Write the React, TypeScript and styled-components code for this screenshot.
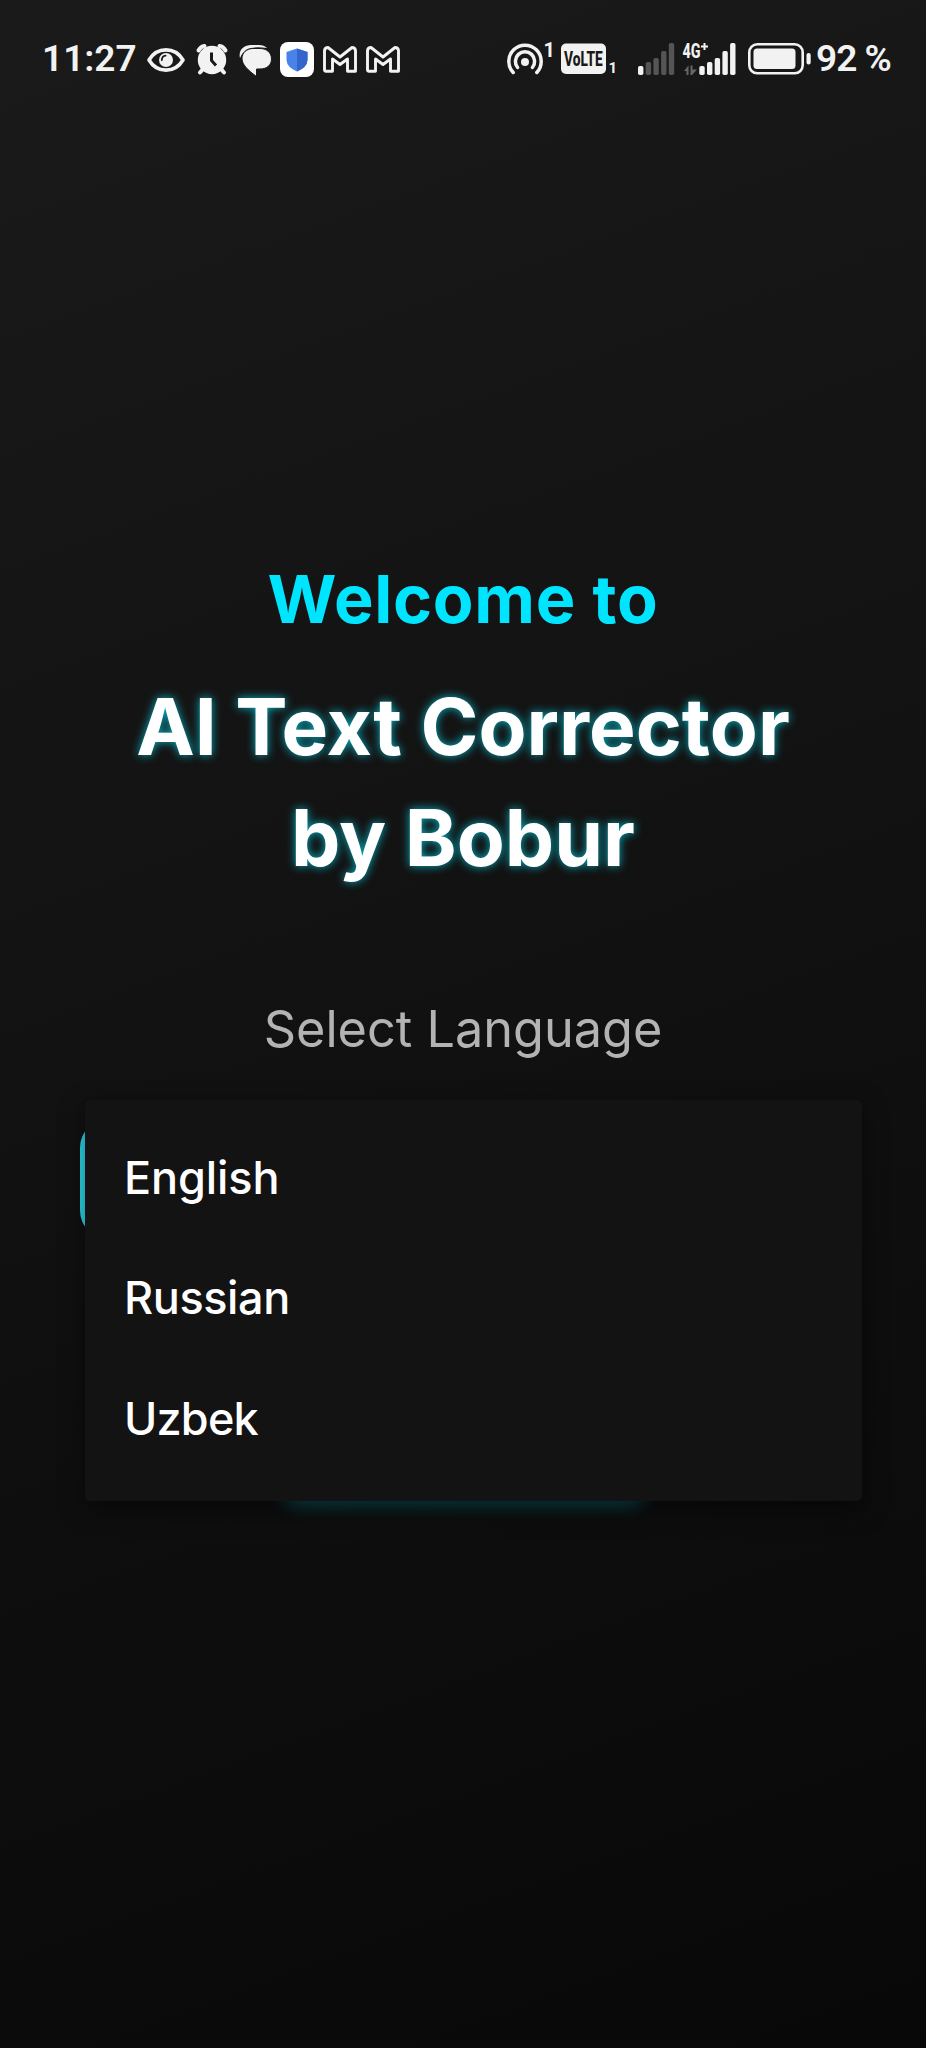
import React from "react";
import styled, { createGlobalStyle } from "styled-components";

const Global = createGlobalStyle`
  html, body { margin: 0; padding: 0; background: #101010; }
  * { box-sizing: border-box; }
`;

const Screen = styled.div`
  width: 926px;
  height: 2048px;
  overflow: hidden;
  display: flex;
  flex-direction: column;
  background: linear-gradient(160deg, #1a1a1a 0%, #080808 100%);
  font-family: Inter, "Noto Sans", sans-serif;
`;

const StatusBar = styled.header`
  height: 118px;
  display: flex;
  justify-content: space-between;
  padding: 40px 35px 0 42px;
  color: #f2f2f2;
`;

const StatusGroup = styled.div`
  display: flex;
  align-items: center;
  height: 38px;
`;

const StatusText = styled.span<{ $width: number; $gap?: number; $spacing?: number }>`
  width: ${(p) => p.$width}px;
  margin-left: ${(p) => p.$gap ?? 0}px;
  font: 600 37px/40px Roboto, sans-serif;
  letter-spacing: ${(p) => p.$spacing ?? 0}px;
  white-space: nowrap;
`;

const Icon = styled.svg<{ $gap?: number }>`
  flex: none;
  height: 38px;
  margin-left: ${(p) => p.$gap ?? 0}px;
  overflow: visible;
`;

const Main = styled.main`
  display: flex;
  flex-direction: column;
  align-items: center;
`;

const Welcome = styled.h2`
  margin: 435.5px 0 0;
  font-size: 66.5px;
  font-weight: 650;
  line-height: 90px;
  letter-spacing: 0.7px;
  color: #00e5ff;
  white-space: nowrap;
`;

const Title = styled.h1`
  margin: 28.7px 0 0;
  font-size: 78.4px;
  font-weight: 700;
  line-height: 110.6px;
  text-align: center;
  color: #fff;
  text-shadow: 0 0 10px rgba(0, 229, 255, 0.75);
  white-space: nowrap;
`;

const TitleLine = styled.span`
  display: block;
`;

const Label = styled.p`
  margin: 100.6px 0 0;
  font-size: 50.4px;
  line-height: 70px;
  color: #b3b3b3;
  white-space: nowrap;
`;

const Picker = styled.section`
  position: relative;
  width: 926px;
  margin-top: 54px;
  display: flex;
  flex-direction: column;
  align-items: center;
`;

const Field = styled.div`
  width: 767px;
  height: 122px;
  border: 5px solid #2bdcee;
  border-radius: 30px;
`;

const Button = styled.div`
  width: 366px;
  height: 110px;
  margin: 149px 0 0 2px;
  border-radius: 18px;
  background: #063a40;
  box-shadow: 0 4px 18px rgba(0, 229, 255, 0.42);
`;

const Menu = styled.ul`
  position: absolute;
  left: 84.5px;
  top: -18px;
  width: 777.5px;
  height: 401px;
  margin: 0;
  padding: 18px 0;
  list-style: none;
  border-radius: 5px;
  background: #131313;
  box-shadow: 0 8px 24px rgba(0, 0, 0, 0.5);
`;

const Option = styled.li<{ $spacing: number }>`
  height: 120.4px;
  padding-left: 39.5px;
  font-size: 45px;
  font-weight: 500;
  line-height: 120.4px;
  letter-spacing: ${(p) => p.$spacing}px;
  color: #fff;
`;

const EyeIcon = () => (
  <Icon width="38" viewBox="0 0 38 38" fill="none">
    <path d="M2 20C10 6.5 28 6.5 36 20C28 33.5 10 33.5 2 20Z" stroke="#f2f2f2" strokeWidth="3.6" strokeLinejoin="round" />
    <circle cx="19" cy="20" r="7" fill="#f2f2f2" />
    <path d="M14.8 20Q15 16 18.6 15.6" stroke="#191919" strokeWidth="1.8" strokeLinecap="round" />
  </Icon>
);

const AlarmIcon = () => (
  <Icon width="32" viewBox="0 0 32 38" $gap={11} fill="none" stroke="#f2f2f2">
    <path d="M2.5 10.5Q4.5 6.5 8.5 6M29.5 10.5Q27.5 6.5 23.5 6" strokeWidth="4" strokeLinecap="round" />
    <path d="M7 29L4 32.5M25 29L28 32.5" strokeWidth="4" strokeLinecap="round" />
    <circle cx="16" cy="20" r="14.2" fill="#f2f2f2" stroke="none" />
    <path d="M15.5 12.5V20.5L20 25.5" stroke="#191919" strokeWidth="3" />
  </Icon>
);

const ChatIcon = () => (
  <Icon width="33" viewBox="0 0 33 38" $gap={11}>
    <path d="M1 18C-1 10 5 5 12 5H20Q25 5 28 8Q13 6 7 10Q3 13 1 18Z" fill="#f2f2f2" />
    <path d="M14 8.5H21C28 8.5 32.5 13 32.5 19S28 29 21 29H17.5V36.5C10 31 3 25 3 18.5C3 12.5 8 8.5 14 8.5Z" fill="#f2f2f2" stroke="#191919" strokeWidth="1" />
  </Icon>
);

const ShieldIcon = () => (
  <Icon width="34" viewBox="0 0 34 38" $gap={8}>
    <rect y="2" width="34" height="35" rx="8" fill="#fff" />
    <path d="M17 8.5L27.5 12V20Q27 27.5 17 31.5Q7 27.5 6.5 20V12Z" fill="#4a83e8" />
    <path d="M17 8.5L27.5 12V20Q27 27.5 17 31.5Z" fill="#3465cc" />
  </Icon>
);

const MailIcon = ({ gap }: { gap: number }) => (
  <Icon width="34" viewBox="0 0 34 38" $gap={gap} fill="none">
    <path
      d="M1.5 10.5Q2 7.5 5 7.5L17 17L29 7.5Q32 7.5 32.5 10.5V31.2H24.5V19L17 24.5L9.5 19V31.2H3Q1.5 31.2 1.5 29.5Z"
      stroke="#f2f2f2" strokeWidth="2.9" strokeLinejoin="round"
    />
  </Icon>
);

const HotspotIcon = () => (
  <Icon width="46" viewBox="0 0 46 38" fill="none" stroke="#f2f2f2" strokeWidth="3.5" strokeLinecap="round">
    <path d="M6.2 32.5A16.2 16.2 0 1 1 29.8 32.5" />
    <path d="M10.6 27.5A9.6 9.6 0 1 1 25.4 27.5" />
    <circle cx="18" cy="22" r="4" fill="#f2f2f2" stroke="none" />
    <text x="36.5" y="16.5" fill="#f2f2f2" stroke="none" fontFamily="Roboto" fontWeight="700" fontSize="20">1</text>
  </Icon>
);

const VolteIcon = () => (
  <Icon width="56" viewBox="0 0 56 38" $gap={8}>
    <rect y="3.5" width="45" height="30.5" rx="5" fill="#f2f2f2" />
    <text transform="translate(3 26) scale(0.67 1)" fill="#191919" fontFamily="Roboto" fontWeight="800" fontSize="20.5">VoLTE</text>
    <text x="47.5" y="33" fill="#f2f2f2" fontFamily="Roboto" fontWeight="700" fontSize="15">1</text>
  </Icon>
);

const BAR_HEIGHTS = [9, 13, 17, 24, 32];

const SignalBars = ({ x, active }: { x: number; active: number }) => (
  <>
    {BAR_HEIGHTS.map((h, i) => (
      <rect key={h} x={x + i * 7.7} y={35 - h} width="5.4" height={h} rx="1.8" fill={i < active ? "#f2f2f2" : "#555"} />
    ))}
  </>
);

const SignalIcon = () => (
  <Icon width="98" viewBox="0 0 98 38" $gap={21}>
    <SignalBars x={0} active={1} />
    <text transform="translate(44.5 18) scale(0.7 1)" fill="#f2f2f2" fontFamily="Roboto" fontWeight="800" fontSize="20.5">4G</text>
    <path d="M66.5 3V10M63 6.5H70" stroke="#f2f2f2" strokeWidth="2" />
    <path d="M46 31L50.5 25.5V35H48.5V31ZM52.5 25.5H54.5V29.5H59L54 35H52.5Z" fill="#666" />
    <SignalBars x={61.3} active={5} />
  </Icon>
);

const BatteryIcon = () => (
  <Icon width="63" viewBox="0 0 63 38" $gap={12} fill="none">
    <rect x="1.3" y="4.3" width="53.4" height="29" rx="8" stroke="#f2f2f2" strokeWidth="2.6" />
    <rect x="5.5" y="8.5" width="42" height="20.5" rx="3.5" fill="#f2f2f2" />
    <rect x="58.5" y="13" width="4.2" height="11.5" rx="2" fill="#f2f2f2" />
  </Icon>
);

const LANGUAGES = [
  { name: "English", spacing: -0.1 },
  { name: "Russian", spacing: -0.4 },
  { name: "Uzbek", spacing: -0.8 },
];

export default function App() {
  return (
    <Screen>
      <Global />
      <StatusBar>
        <StatusGroup>
          <StatusText $width={105}>11:27</StatusText>
          <EyeIcon />
          <AlarmIcon />
          <ChatIcon />
          <ShieldIcon />
          <MailIcon gap={9} />
          <MailIcon gap={8.5} />
        </StatusGroup>
        <StatusGroup>
          <HotspotIcon />
          <VolteIcon />
          <SignalIcon />
          <BatteryIcon />
          <StatusText $width={75} $gap={5} $spacing={-1}>92 %</StatusText>
        </StatusGroup>
      </StatusBar>
      <Main>
        <Welcome>Welcome to</Welcome>
        <Title>
          <TitleLine>AI Text Corrector</TitleLine>
          <TitleLine>by Bobur</TitleLine>
        </Title>
        <Label>Select Language</Label>
        <Picker>
          <Field />
          <Button />
          <Menu>
            {LANGUAGES.map((l) => (
              <Option key={l.name} $spacing={l.spacing}>{l.name}</Option>
            ))}
          </Menu>
        </Picker>
      </Main>
    </Screen>
  );
}
